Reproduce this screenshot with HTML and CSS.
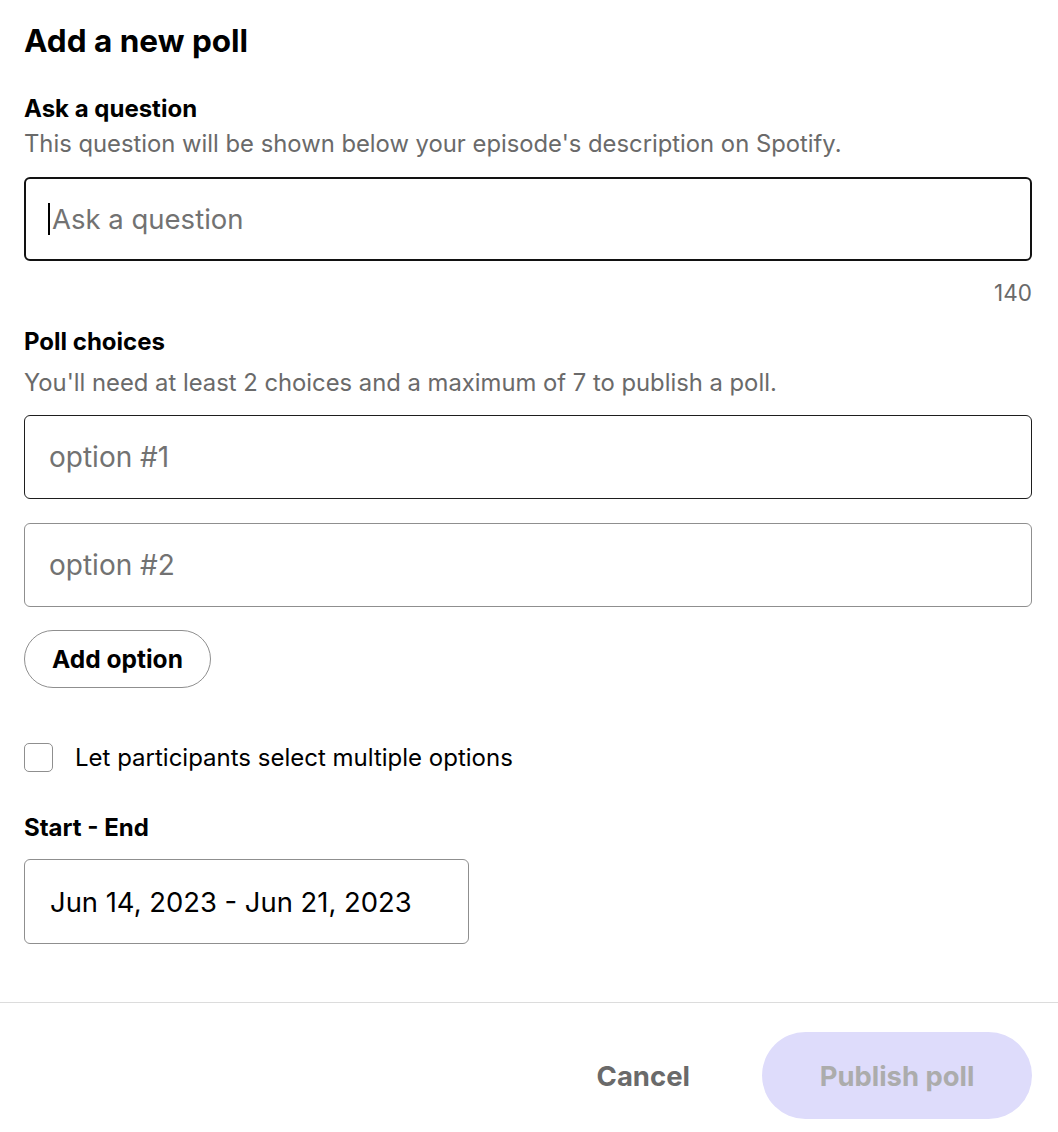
FILE: index.html
```html
<!DOCTYPE html>
<html>
<head>
<meta charset="utf-8">
<link rel="stylesheet" href="styles.css">
</head>
<body>
<div class="dialog">
  <div class="content">
    <h1 class="title">Add a new poll</h1>

    <section class="field">
      <div class="label">Ask a question</div>
      <div class="hint">This question will be shown below your episode's description on Spotify.</div>
      <div class="input focus"><span class="caret"></span><span class="ph">Ask a question</span></div>
      <div class="counter">140</div>
    </section>

    <section class="field choices">
      <div class="label">Poll choices</div>
      <div class="hint">You'll need at least 2 choices and a maximum of 7 to publish a poll.</div>
      <div class="input dark"><span class="ph">option #1</span></div>
      <div class="input light"><span class="ph">option #2</span></div>
      <button class="add-btn">Add option</button>
    </section>

    <label class="check-row">
      <span class="checkbox"></span>
      <span class="check-label">Let participants select multiple options</span>
    </label>

    <section class="field dates">
      <div class="label">Start - End</div>
      <div class="date-input">Jun 14, 2023 - Jun 21, 2023</div>
    </section>
  </div>

  <div class="footer">
    <button class="cancel">Cancel</button>
    <button class="publish">Publish poll</button>
  </div>
</div>
</body>
</html>
```

FILE: styles.css
```css
* { box-sizing: border-box; }
html, body {
  margin: 0;
  padding: 0;
  background: #fff;
}
body {
  font-family: Inter, "Noto Sans", "Liberation Sans", sans-serif;
  color: #000;
}
.dialog {
  width: 1058px;
  height: 1132px;
  display: flex;
  flex-direction: column;
}
.content {
  padding: 23px 26px 0 24px;
  display: flex;
  flex-direction: column;
}
.title {
  margin: 0;
  font-size: 31.5px;
  font-weight: 700;
  line-height: 36px;
  letter-spacing: 0;
}
.field { display: flex; flex-direction: column; }
.label {
  font-size: 24px;
  font-weight: 700;
  line-height: 30px;
  margin-top: 35px;
}
.hint {
  font-size: 23.8px;
  color: #6a6a6a;
  line-height: 30px;
  margin-top: 5px;
}
.input {
  height: 84px;
  border-radius: 6px;
  margin-top: 18px;
  display: flex;
  align-items: center;
  padding: 0 24px;
  font-size: 27.5px;
}
.input.focus { border: 2px solid #121212; padding-left: 22px; }
.input.dark { border: 1.5px solid #1e1e1e; margin-top: 17px; font-size: 28px; }
.input.light { border: 1px solid #8f8f8f; margin-top: 24px; font-size: 28px; }
.ph { color: #727272; }
.caret {
  width: 2px;
  height: 32px;
  background: #000;
  margin-right: 2px;
}
.counter {
  text-align: right;
  font-size: 22.5px;
  color: #6a6a6a;
  margin-top: 20px;
  line-height: 24px;
}
.choices .label { margin-top: 22px; }
.choices .hint { margin-top: 11px; }
.add-btn {
  align-self: flex-start;
  margin-top: 23px;
  height: 58px;
  width: 187px;
  padding: 0;
  border-radius: 29px;
  border: 1px solid #8f8f8f;
  background: #fff;
  font-family: inherit;
  font-size: 24.5px;
  font-weight: 700;
  color: #000;
}
.check-row {
  display: flex;
  align-items: center;
  margin-top: 55px;
  gap: 22px;
  height: 29px;
}
.checkbox {
  width: 29px;
  height: 29px;
  border: 1px solid #8f8f8f;
  border-radius: 5px;
  flex: none;
}
.check-label { font-size: 24px; line-height: 29px; }
.dates .label { margin-top: 41px; }
.date-input {
  width: 445px;
  height: 85px;
  margin-top: 16px;
  border: 1px solid #8f8f8f;
  border-radius: 6px;
  display: flex;
  align-items: center;
  padding: 0 25px;
  font-size: 27.4px;
}
.footer {
  margin-top: 58px;
  border-top: 1px solid #dcdcdc;
  display: flex;
  justify-content: flex-end;
  align-items: center;
  padding: 29px 26px 0 0;
  gap: 72px;
}
.cancel {
  border: none;
  background: none;
  font-family: inherit;
  font-size: 27.5px;
  font-weight: 700;
  color: #6a6a6a;
  padding: 0;
}
.publish {
  width: 270px;
  height: 87px;
  border: none;
  border-radius: 44px;
  background: #dedcfb;
  font-family: inherit;
  font-size: 27.4px;
  font-weight: 700;
  color: #acacac;
}
```
